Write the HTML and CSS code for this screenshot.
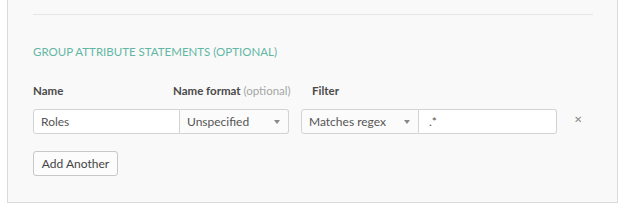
FILE: index.html
```html
<!DOCTYPE html>
<html lang="en">
<head>
    <meta charset="UTF-8">
    <title>Group Attribute Statements</title>
    <link rel="stylesheet" href="styles.css">
</head>
<body>
    <div class="panel">
        <div class="divider"></div>

        <h3 class="section-title">Group Attribute Statements (optional)</h3>

        <div class="labels">
            <span class="label label-name">Name</span>
            <span class="label label-format">Name format <em>(optional)</em></span>
            <span class="label">Filter</span>
        </div>

        <div class="statement-row">
            <input type="text" class="field field-name" value="Roles">
            <div class="select select-format">
                <span>Unspecified</span>
                <span class="caret"></span>
            </div>
            <div class="select select-filter">
                <span>Matches regex</span>
                <span class="caret"></span>
            </div>
            <input type="text" class="field field-value" value=".*">
            <span class="remove">&#x2715;</span>
        </div>

        <button class="add-another">Add Another</button>
    </div>
</body>
</html>
```

FILE: styles.css
```css
/* General Styling */
body {
    margin: 0;
    padding: 0;
    background-color: #fff;
    font-family: 'Lato', 'Open Sans', sans-serif;
    font-size: 12px;
    color: #333;
}

.panel {
    margin-left: 7px;
    width: 611px;
    height: 203px;
    box-sizing: border-box;
    padding: 14px 0 0 25px;
    background-color: #f9f9f9;
    border: 1px solid #dadada;
    border-top: none;
}

.divider {
    width: 560px;
    border-top: 1px solid #e6e6e6;
}

.section-title {
    margin: 30px 0 0;
    font-size: 11.5px;
    font-weight: normal;
    text-transform: uppercase;
    color: #62b7a4;
    line-height: 14px;
}

/* Labels */
.labels {
    display: flex;
    margin-top: 25px;
    line-height: 14px;
}

.label {
    font-weight: bold;
    color: #4a4a4a;
    font-size: 11.5px;
}

.label-name {
    width: 140px;
}

.label-format {
    width: 139px;
}

.label em {
    font-style: normal;
    font-weight: normal;
    color: #a5a5a5;
}

/* Statement row */
.statement-row {
    display: flex;
    align-items: center;
    margin-top: 11px;
    height: 25px;
}

.field,
.select {
    box-sizing: border-box;
    height: 25px;
    border: 1px solid #d3d3d3;
    font-family: inherit;
    font-size: 12px;
    color: #555;
    margin: 0;
}

.field {
    background-color: #fff;
    outline: none;
}

.field-name {
    width: 147px;
    padding: 0 7px;
    border-radius: 3px 0 0 3px;
}

.select {
    display: flex;
    align-items: center;
    justify-content: space-between;
    background-color: #fbfbfb;
    padding: 0 8px 0 7px;
}

.select-format {
    width: 109px;
    border-left: none;
    border-radius: 0 3px 3px 0;
}

.select-filter {
    width: 118px;
    margin-left: 12px;
    border-radius: 3px 0 0 3px;
}

.caret {
    width: 0;
    height: 0;
    border-left: 3px solid transparent;
    border-right: 3px solid transparent;
    border-top: 4px solid #888;
}

.field-value {
    width: 138px;
    padding: 0 10px;
    border-left: none;
    border-radius: 0 3px 3px 0;
}

.remove {
    margin-left: 17px;
    margin-top: -6px;
    font-size: 10px;
    color: #8a8a8a;
}

/* Add another */
.add-another {
    display: block;
    margin-top: 17px;
    width: 85px;
    height: 25px;
    padding: 0;
    background-color: #fcfcfc;
    border: 1px solid #c8c8c8;
    border-radius: 3px;
    font-family: inherit;
    font-size: 12px;
    color: #444;
}
```
